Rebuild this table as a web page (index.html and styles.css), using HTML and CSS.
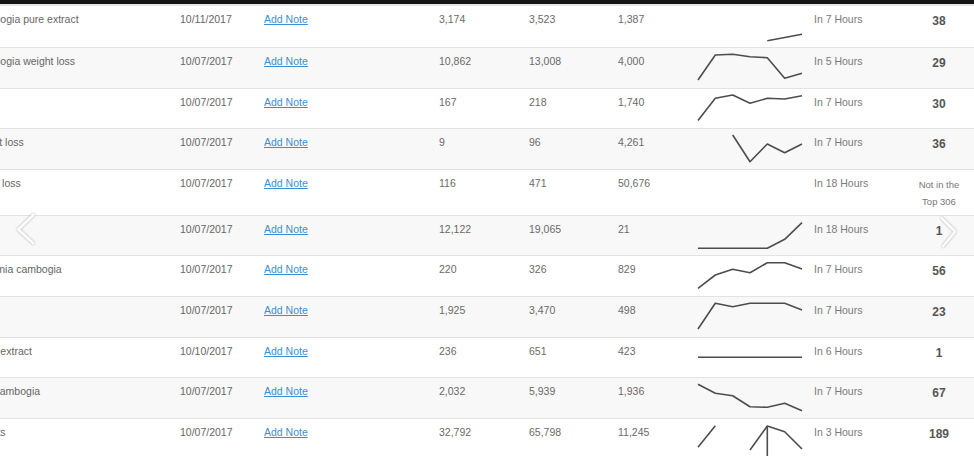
FILE: index.html
```html
<!DOCTYPE html>
<html>
<head>
<meta charset="utf-8">
<link rel="stylesheet" href="styles.css">
</head>
<body>
<div class="page">
  <div class="topbar"></div>
  <div class="table">
    <div class="row first">
      <div class="kw">garcinia cambogia pure extract</div>
      <div class="date">10/11/2017</div>
      <div class="note"><a href="#">Add Note</a></div>
      <div class="num">3,174</div>
      <div class="num">3,523</div>
      <div class="num">1,387</div>
      <div class="spark"><svg width="106" height="40"><polyline points="70.3,34.7 87.7,31.5 105,28.3"/></svg></div>
      <div class="time">In 7 Hours</div>
      <div class="rank">38</div>
    </div>
    <div class="row">
      <div class="kw">garcinia cambogia weight loss</div>
      <div class="date">10/07/2017</div>
      <div class="note"><a href="#">Add Note</a></div>
      <div class="num">10,862</div>
      <div class="num">13,008</div>
      <div class="num">4,000</div>
      <div class="spark"><svg width="106" height="40"><polyline points="1,32 18.3,7 35.7,6.3 53,8.7 70.3,9.7 87.7,30.3 105,25.3"/></svg></div>
      <div class="time">In 5 Hours</div>
      <div class="rank">29</div>
    </div>
    <div class="row">
      <div class="kw">garcinia</div>
      <div class="date">10/07/2017</div>
      <div class="note"><a href="#">Add Note</a></div>
      <div class="num">167</div>
      <div class="num">218</div>
      <div class="num">1,740</div>
      <div class="spark"><svg width="106" height="40"><polyline points="1,31.5 18.3,9.3 35.7,6 53,14.3 70.3,9.3 87.7,10 105,6.7"/></svg></div>
      <div class="time">In 7 Hours</div>
      <div class="rank">30</div>
    </div>
    <div class="row">
      <div class="kw">healthy weight loss</div>
      <div class="date">10/07/2017</div>
      <div class="note"><a href="#">Add Note</a></div>
      <div class="num">9</div>
      <div class="num">96</div>
      <div class="num">4,261</div>
      <div class="spark"><svg width="106" height="40"><polyline points="35.7,6 53,32.7 70.3,15 87.7,23.7 105,15"/></svg></div>
      <div class="time">In 7 Hours</div>
      <div class="rank">36</div>
    </div>
    <div class="row tall">
      <div class="kw">garcinia quick loss</div>
      <div class="date">10/07/2017</div>
      <div class="note"><a href="#">Add Note</a></div>
      <div class="num">116</div>
      <div class="num">471</div>
      <div class="num">50,676</div>
      <div class="spark"></div>
      <div class="time">In 18 Hours</div>
      <div class="rank"><span class="nit">Not in the<br>Top 306</span></div>
    </div>
    <div class="row">
      <div class="kw">garcinia</div>
      <div class="date">10/07/2017</div>
      <div class="note"><a href="#">Add Note</a></div>
      <div class="num">12,122</div>
      <div class="num">19,065</div>
      <div class="num">21</div>
      <div class="spark"><svg width="106" height="40"><polyline points="1,32.3 70.3,32.3 87.7,23.3 105,6.7"/></svg></div>
      <div class="time">In 18 Hours</div>
      <div class="rank">1</div>
    </div>
    <div class="row">
      <div class="kw">get pure garcinia cambogia</div>
      <div class="date">10/07/2017</div>
      <div class="note"><a href="#">Add Note</a></div>
      <div class="num">220</div>
      <div class="num">326</div>
      <div class="num">829</div>
      <div class="spark"><svg width="106" height="40"><polyline points="1,32.3 18.3,19 35.7,13.3 53,16.7 70.3,6.7 87.7,6.7 105,13"/></svg></div>
      <div class="time">In 7 Hours</div>
      <div class="rank">56</div>
    </div>
    <div class="row">
      <div class="kw">cambogia</div>
      <div class="date">10/07/2017</div>
      <div class="note"><a href="#">Add Note</a></div>
      <div class="num">1,925</div>
      <div class="num">3,470</div>
      <div class="num">498</div>
      <div class="spark"><svg width="106" height="40"><polyline points="1,32 18.3,6.3 35.7,9.7 53,6.3 70.3,6.3 87.7,6.3 105,13"/></svg></div>
      <div class="time">In 7 Hours</div>
      <div class="rank">23</div>
    </div>
    <div class="row">
      <div class="kw">garcinia plant extract</div>
      <div class="date">10/10/2017</div>
      <div class="note"><a href="#">Add Note</a></div>
      <div class="num">236</div>
      <div class="num">651</div>
      <div class="num">423</div>
      <div class="spark"><svg width="106" height="40"><polyline points="1,19.3 105,19.3"/></svg></div>
      <div class="time">In 6 Hours</div>
      <div class="rank">1</div>
    </div>
    <div class="row">
      <div class="kw">buy garcinia cambogia</div>
      <div class="date">10/07/2017</div>
      <div class="note"><a href="#">Add Note</a></div>
      <div class="num">2,032</div>
      <div class="num">5,939</div>
      <div class="num">1,936</div>
      <div class="spark"><svg width="106" height="40"><polyline points="1,6.3 18.3,15.3 35.7,17.7 53,28.7 70.3,29.3 87.7,25.3 105,32.7"/></svg></div>
      <div class="time">In 7 Hours</div>
      <div class="rank">67</div>
    </div>
    <div class="row">
      <div class="kw">garcinia results</div>
      <div class="date">10/07/2017</div>
      <div class="note"><a href="#">Add Note</a></div>
      <div class="num">32,792</div>
      <div class="num">65,798</div>
      <div class="num">11,245</div>
      <div class="spark"><svg width="106" height="40"><polyline points="1,28.3 18.3,6.7"/><polyline points="53,31 70.3,7 87.7,12.7 105,30"/><polyline points="70.3,7 70.3,40"/></svg></div>
      <div class="time">In 3 Hours</div>
      <div class="rank">189</div>
    </div>
  </div>
  <svg class="arrow arrow-left" width="24" height="36"><polyline points="19.3,4 4.3,18.5 19.3,32.3"/></svg>
  <svg class="arrow arrow-right" width="22" height="36"><polyline points="4,4.3 17,17.7 5.3,32"/></svg>
</div>
</body>
</html>
```

FILE: styles.css
```css
html, body {
  margin: 0;
  padding: 0;
  background: #ffffff;
}

.page {
  position: relative;
  width: 974px;
  height: 456px;
  overflow: hidden;
  font-family: "Liberation Sans", Arial, sans-serif;
  font-size: 10.5px;
  color: #666666;
}

.topbar {
  height: 4px;
  background: #151515;
  border-bottom: 2px solid #e6e6e6;
}

.table {
  margin-left: -65px;
}

.row {
  display: grid;
  grid-template-columns: 245px 84px 175px 90px 89px 79px 117px 90px 70px;
  box-sizing: border-box;
  height: 40.6px;
  border-bottom: 1px solid #e3e3e3;
  background: #ffffff;
}

.row:nth-child(even) {
  background: #f8f8f8;
}

.row.first {
  height: 42px;
}

.row.tall {
  height: 46px;
}

.row > div {
  padding-top: 6px;
  line-height: 14px;
  white-space: nowrap;
}

.kw {
  overflow: hidden;
  color: #666666;
}

.date {
  color: #666666;
}

.note a {
  color: #3a8fd3;
  text-decoration: underline;
}

.num {
  color: #6a6a6a;
}

.row > .spark {
  padding-top: 0;
}

.spark svg {
  display: block;
  overflow: visible;
}

.spark polyline {
  fill: none;
  stroke: #4d4d4d;
  stroke-width: 1.6;
  stroke-linejoin: round;
}

.time {
  color: #7a7a7a;
}

.row > .rank {
  padding-top: 8px;
  text-align: center;
  font-size: 12px;
  font-weight: bold;
  color: #555555;
}

.rank .nit {
  display: block;
  margin-top: -1.5px;
  font-size: 9.5px;
  line-height: 17px;
  font-weight: normal;
  color: #777777;
}

.arrow {
  position: absolute;
  overflow: visible;
  filter: drop-shadow(0 0 1px rgba(0, 0, 0, 0.35));
}

.arrow polyline {
  fill: none;
  stroke: #ffffff;
  stroke-width: 2.6;
  stroke-linecap: round;
  stroke-linejoin: round;
}

.arrow-left {
  left: 14px;
  top: 211px;
}

.arrow-right {
  left: 938px;
  top: 214px;
}
```
